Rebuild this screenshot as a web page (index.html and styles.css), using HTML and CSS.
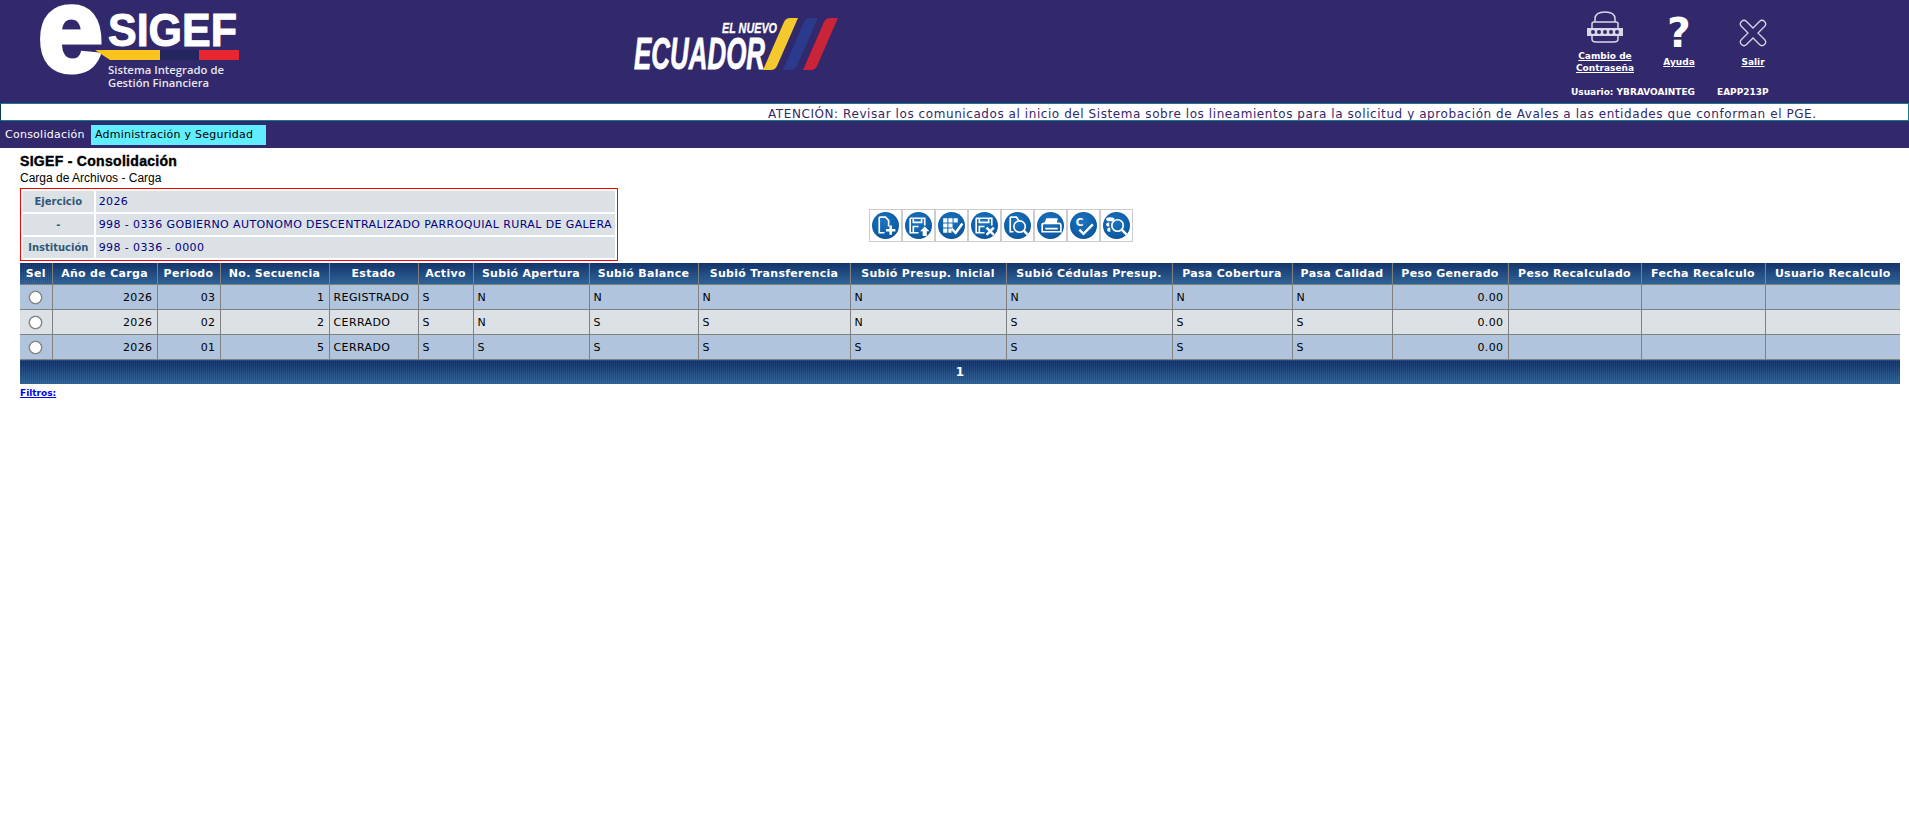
FILE: index.html
```html
<!DOCTYPE html>
<html lang="es">
<head>
    <meta charset="UTF-8">
    <meta name="viewport" content="width=device-width, initial-scale=1.0">
    <title>SIGEF - Consolidación</title>
    <link rel="stylesheet" href="styles.css">
</head>
<body>
    <header class="top">
        <svg class="brand" width="220" height="103" viewBox="0 0 220 103">
            <text class="brand-e" x="6" y="71" textLength="65" lengthAdjust="spacingAndGlyphs">e</text>
            <text class="brand-name" x="76" y="46" textLength="129" lengthAdjust="spacingAndGlyphs">SIGEF</text>
            <polygon points="63,50 128,50 128,60 78,60" fill="#fbc31c"/>
            <rect x="128" y="50" width="39" height="10" fill="#22285f"/>
            <rect x="167" y="50" width="40" height="10" fill="#e8262f"/>
            <text class="brand-sub" x="76" y="74" textLength="116" lengthAdjust="spacingAndGlyphs">Sistema Integrado de</text>
            <text class="brand-sub" x="76" y="87" textLength="101" lengthAdjust="spacingAndGlyphs">Gestión Financiera</text>
        </svg>
        <svg class="ecuador" width="210" height="103" viewBox="0 0 210 103">
            <text class="ecu-small" x="90" y="33" textLength="55" lengthAdjust="spacingAndGlyphs">EL NUEVO</text>
            <text class="ecu-big" x="2" y="69" textLength="131" lengthAdjust="spacingAndGlyphs">ECUADOR</text>
            <path d="M131 70 L152 22 Q154 18 158 18 H166 L145 66 Q143 70 139 70 Z" fill="#f3c92e"/>
            <path d="M151 70 L172 22 Q174 18 178 18 H186 L165 66 Q163 70 159 70 Z" fill="#2b3a8c"/>
            <path d="M171 70 L192 22 Q194 18 198 18 H206 L185 66 Q183 70 179 70 Z" fill="#cb2337"/>
        </svg>
        <div class="account">
            <div class="links">
                <a class="link" href="#">
                    <svg class="link-ico" width="36" height="34" viewBox="0 0 36 34">
                        <path d="M8 11 V8 Q8 1 18 1 Q28 1 28 8 V11 M5 17 V13 Q5 11 7 11 H29 Q31 11 31 13 V17 M5 25 V28 Q5 31 9 31 H27 Q31 31 31 28 V25" fill="none" stroke="#d9d7e6" stroke-width="1.500"/>
                        <rect x="0" y="17" width="36" height="8" fill="#d9d7e6"/>
                        <g fill="#32286c"><circle cx="6" cy="21" r="2"/><circle cx="12" cy="21" r="2"/><circle cx="18" cy="21" r="2"/><circle cx="24" cy="21" r="2"/><circle cx="30" cy="21" r="2"/></g>
                    </svg>
                    <span class="link-text">Cambio de<br>Contraseña</span>
                </a>
                <a class="link" href="#">
                    <span class="help-mark">?</span>
                    <span class="link-text low">Ayuda</span>
                </a>
                <a class="link" href="#">
                    <svg class="link-ico" width="36" height="34" viewBox="0 0 36 34">
                        <path d="M6.500 10.500 Q9 8 11.500 10.500 L18 17 L24.500 10.500 Q27 8 29.500 10.500 Q32 13 29.500 15.500 L23 22 L29.500 28.500 Q32 31 29.500 33.500 Q27 36 24.500 33.500 L18 27 L11.500 33.500 Q9 36 6.500 33.500 Q4 31 6.500 28.500 L13 22 L6.500 15.500 Q4 13 6.500 10.500 Z" fill="none" stroke="#d9d7e6" stroke-width="1.300"/>
                    </svg>
                    <span class="link-text low">Salir</span>
                </a>
            </div>
            <div class="user-row">
                <span>Usuario: YBRAVOAINTEG</span>
                <span>EAPP213P</span>
            </div>
        </div>
    </header>

    <div class="notice">ATENCIÓN: Revisar los comunicados al inicio del Sistema sobre los lineamientos para la solicitud y aprobación de Avales a las entidades que conforman el PGE.</div>

    <nav class="menu">
        <a class="menu-item" href="#">Consolidación</a>
        <a class="menu-item active" href="#">Administración y Seguridad</a>
    </nav>

    <main class="content">
        <h1>SIGEF - Consolidación</h1>
        <p class="subtitle">Carga de Archivos - Carga</p>

        <div class="summary">
            <table class="info">
                <tr><th>Ejercicio</th><td>2026</td></tr>
                <tr><th>-</th><td>998 - 0336 GOBIERNO AUTONOMO DESCENTRALIZADO PARROQUIAL RURAL DE GALERA</td></tr>
                <tr><th>Institución</th><td>998 - 0336 - 0000</td></tr>
            </table>

            <div class="toolbar">
                <button class="tool"><svg class="ico" viewBox="0 0 26 26"><path d="M7 5 H13 L16 8 V14 M12 20 H7 V5"/><path class="thick" d="M18 13 V22 M13.500 17.500 H22.500"/></svg></button>
                <button class="tool"><svg class="ico" viewBox="0 0 26 26"><path d="M5 6 H19 V13 M13 20 H5 V6 M8 6 V10 H16 V6 M8 20 V14 H13"/><path class="solid" d="M19 14 L23.500 18.500 H21 V23 H17 V18.500 H14.500 Z"/></svg></button>
                <button class="tool"><svg class="ico" viewBox="0 0 26 26"><path class="solid" d="M5 6 H9 V10 H5 Z M10 6 H14 V10 H10 Z M15 6 H19 V10 H15 Z M5 11 H9 V15 H5 Z M10 11 H14 V15 H10 Z M5 16 H9 V20 H5 Z M10 16 H13 V20 H10 Z"/><path class="thick" d="M13 16 L17 20 L23.500 11"/></svg></button>
                <button class="tool"><svg class="ico" viewBox="0 0 26 26"><path d="M5 6 H20 V13 M13 20 H5 V6 M8 6 V10 H17 V6 M8 20 V14 H13"/><path class="thick" d="M15 15 L22 22 M22 15 L15 22"/></svg></button>
                <button class="tool"><svg class="ico" viewBox="0 0 26 26"><path d="M6 5 H12 L14 8 M9 19 H6 V5"/><circle cx="15" cy="14" r="5.500"/><path class="thick" d="M19 18 L24 23"/></svg></button>
                <button class="tool"><svg class="ico" viewBox="0 0 26 26"><path class="solid" d="M9 6 H20 L19 11 H7 Z"/><path d="M5 12 Q5 11 7 11 H21 Q23 11 23 13 V19 H5 Z M8 16 H20" /></svg></button>
                <button class="tool"><svg class="ico" viewBox="0 0 26 26"><text class="ico-letter" x="5.500" y="13">C</text><path class="thick" d="M9 17 L13 21 L22 12"/></svg></button>
                <button class="tool"><svg class="ico" viewBox="0 0 26 26"><path class="solid" d="M3 7 Q3 5 7 5 Q11 5 11 7 Q11 9 7 9 Q3 9 3 7 Z M3 12 Q3 10 6 10 V14 Q3 14 3 12 Z M4 17 Q4 15 7 15 V19 Q4 19 4 17 Z"/><circle cx="14" cy="13" r="5.500"/><path class="thick" d="M18 17 L23 22"/></svg></button>
            </div>
        </div>

        <table class="grid">
            <colgroup>
                <col class="w32"><col class="w105"><col class="w63"><col class="w109"><col class="w89"><col class="w55"><col class="w116"><col class="w109"><col class="w152"><col class="w156"><col class="w166"><col class="w120"><col class="w100"><col class="w116"><col class="w133"><col class="w124"><col class="w135">
            </colgroup>
            <thead>
                <tr>
                    <th>Sel</th><th>Año de Carga</th><th>Periodo</th><th>No. Secuencia</th><th>Estado</th><th>Activo</th><th>Subió Apertura</th><th>Subió Balance</th><th>Subió Transferencia</th><th>Subió Presup. Inicial</th><th>Subió Cédulas Presup.</th><th>Pasa Cobertura</th><th>Pasa Calidad</th><th>Peso Generado</th><th>Peso Recalculado</th><th>Fecha Recalculo</th><th>Usuario Recalculo</th>
                </tr>
            </thead>
            <tbody>
                <tr class="odd">
                    <td class="sel"><input type="radio" name="sel"></td><td class="num">2026</td><td class="num">03</td><td class="num">1</td><td>REGISTRADO</td><td>S</td><td>N</td><td>N</td><td>N</td><td>N</td><td>N</td><td>N</td><td>N</td><td class="num">0.00</td><td></td><td></td><td></td>
                </tr>
                <tr>
                    <td class="sel"><input type="radio" name="sel"></td><td class="num">2026</td><td class="num">02</td><td class="num">2</td><td>CERRADO</td><td>S</td><td>N</td><td>S</td><td>S</td><td>N</td><td>S</td><td>S</td><td>S</td><td class="num">0.00</td><td></td><td></td><td></td>
                </tr>
                <tr class="odd">
                    <td class="sel"><input type="radio" name="sel"></td><td class="num">2026</td><td class="num">01</td><td class="num">5</td><td>CERRADO</td><td>S</td><td>S</td><td>S</td><td>S</td><td>S</td><td>S</td><td>S</td><td>S</td><td class="num">0.00</td><td></td><td></td><td></td>
                </tr>
            </tbody>
            <tfoot>
                <tr><td colspan="17">1</td></tr>
            </tfoot>
        </table>

        <a class="filters" href="#">Filtros:</a>
    </main>
</body>
</html>
```

FILE: styles.css
```css
html, body {
    margin: 0;
    background: #fff;
    font-family: "DejaVu Sans", Verdana, sans-serif;
}

/* header */
.top {
    display: flex;
    height: 103px;
    background: #32286c;
}

.brand {
    margin-left: 32px;
    flex: none;
    overflow: visible;
}

.brand text {
    fill: #fff;
    font-family: "Liberation Sans", sans-serif;
    font-weight: bold;
}

.brand-e {
    font-size: 118px;
    stroke: #fff;
    stroke-width: 5px;
}

.brand-name {
    font-size: 47px;
    stroke: #fff;
    stroke-width: 1px;
}

.brand .brand-sub {
    font-family: "Open Sans", sans-serif;
    font-size: 11px;
    font-weight: 600;
    fill: #e6e6ee;
}

.ecuador {
    margin-left: 380px;
    flex: none;
    overflow: visible;
}

.ecuador text {
    fill: #fff;
    stroke: #fff;
    font-family: "Liberation Sans", sans-serif;
    font-style: italic;
    font-weight: bold;
}

.ecu-small {
    font-size: 15px;
    stroke-width: .3px;
}

.ecu-big {
    font-size: 44px;
    stroke-width: .8px;
}

.account {
    margin-left: 726px;
    flex: none;
    color: #fff;
    font-size: 9px;
    font-weight: bold;
}

.links {
    display: flex;
    height: 87px;
    padding-top: 11px;
    box-sizing: border-box;
}

.link {
    width: 74px;
    display: flex;
    flex-direction: column;
    align-items: center;
    color: #fff;
    text-align: center;
    line-height: 12px;
    text-decoration: none;
}

.link-ico {
    height: 34px;
    margin-bottom: 5px;
    overflow: visible;
}

.link-text {
    text-decoration: underline;
}

.link-text.low {
    margin-top: 6px;
}

.help-mark {
    height: 34px;
    margin-bottom: 5px;
    font-size: 41px;
    line-height: 44px;
    font-family: "DejaVu Sans", sans-serif;
}

.user-row {
    display: flex;
    gap: 22px;
    padding-left: 3px;
    white-space: nowrap;
}

/* notice */
.notice {
    height: 14px;
    line-height: 16px;
    padding: 2px 0 0 767px;
    border: 1px solid #0f7f8f;
    border-left-color: #0c3f4a;
    background: #fff;
    color: #32286c;
    font-size: 12px;
    letter-spacing: .57px;
    white-space: nowrap;
    overflow: hidden;
}

/* menu */
.menu {
    display: flex;
    height: 27px;
    align-items: center;
    background: #32286c;
    font-size: 11px;
    letter-spacing: .25px;
}

.menu-item {
    color: #fff;
    padding-left: 5px;
    width: 91px;
    box-sizing: border-box;
    text-decoration: none;
}

.menu-item.active {
    width: 175px;
    height: 20px;
    line-height: 20px;
    padding-left: 4px;
    background: #60eeff;
    color: #000;
}

/* content */
.content {
    padding: 0 9px 0 20px;
}

h1 {
    margin: 5px 0 0;
    font: bold 14px/16px "Liberation Sans", sans-serif;
    letter-spacing: .3px;
    -webkit-text-stroke: .4px #000;
}

.subtitle {
    margin: 2px 0 3px;
    font: 12px/14px "Liberation Sans", sans-serif;
}

.summary {
    display: flex;
    align-items: center;
    gap: 251px;
    margin-bottom: 2px;
}

.info {
    width: 598px;
    height: 73px;
    border: 1px solid #f00;
    border-spacing: 2px;
    font-size: 11px;
}

.info th, .info td {
    background: #dce1e6;
    padding: 0 3px;
    white-space: nowrap;
}

.info th {
    width: 65px;
    color: #2f5878;
    font-size: 10px;
}

.info td {
    color: #000080;
    letter-spacing: .4px;
}

.toolbar {
    display: flex;
    margin-top: 1px;
}

.tool {
    width: 33px;
    height: 33px;
    padding: 0;
    border: 1px solid #ccc;
    background: #fff;
    display: flex;
    align-items: center;
    justify-content: center;
}

.ico {
    width: 27px;
    height: 27px;
    border-radius: 50%;
    background: radial-gradient(circle at 45% 35%, #1c74c0, #0d5ba4 65%, #0a3f78);
    fill: none;
    stroke: #fff;
    stroke-width: 1.600;
}

.ico .thick {
    stroke-width: 2.400;
}

.ico .solid {
    fill: #fff;
    stroke: none;
}

.ico-letter {
    fill: #fff;
    stroke: none;
    font: bold 10px "DejaVu Sans", sans-serif;
}

/* grid */
.grid {
    width: 1880px;
    table-layout: fixed;
    border-collapse: collapse;
    font-size: 11px;
}

.w32 { width: 32px; }
.w55 { width: 55px; }
.w63 { width: 63px; }
.w89 { width: 89px; }
.w100 { width: 100px; }
.w105 { width: 105px; }
.w109 { width: 109px; }
.w116 { width: 116px; }
.w120 { width: 120px; }
.w124 { width: 124px; }
.w133 { width: 133px; }
.w135 { width: 135px; }
.w152 { width: 152px; }
.w156 { width: 156px; }
.w166 { width: 166px; }

.grid thead th, .grid tfoot td {
    background:
        repeating-linear-gradient(90deg, rgba(255, 255, 255, .06) 0 1px, transparent 1px 2px),
        repeating-linear-gradient(0deg, rgba(0, 0, 0, .06) 0 1px, transparent 1px 2px),
        linear-gradient(#0d2f6a, #2a6298);
    color: #fff;
    font-weight: bold;
    letter-spacing: .3px;
    text-align: center;
    white-space: nowrap;
}

.grid thead th {
    height: 21px;
    padding: 0;
    border: 1px solid #808080;
    border-top: 0;
    border-bottom: 0;
}

.grid thead th:first-child, .grid tbody td:first-child {
    border-left: 0;
}

.grid thead th:last-child, .grid tbody td:last-child {
    border-right: 0;
}

.grid tbody td {
    height: 24px;
    padding: 0 4px;
    border: 1px solid #808080;
    background: #dce1e6;
    color: #000;
    letter-spacing: .4px;
}

.grid tbody tr.odd td {
    background: #b0c4de;
}

.grid td.num {
    text-align: right;
}

.grid td.sel {
    padding: 0;
    text-align: center;
}

.sel input {
    appearance: none;
    width: 13px;
    height: 13px;
    margin: 4px 0 0;
    border: 1px solid #767676;
    border-radius: 50%;
    background: #fff;
    box-shadow: 0 0 0 .5px #999;
}

.grid tfoot td {
    height: 24px;
    padding: 0;
    font-size: 12px;
}

.filters {
    display: block;
    margin-top: 4px;
    color: #0000ee;
    font-size: 9px;
    font-weight: bold;
}
```
